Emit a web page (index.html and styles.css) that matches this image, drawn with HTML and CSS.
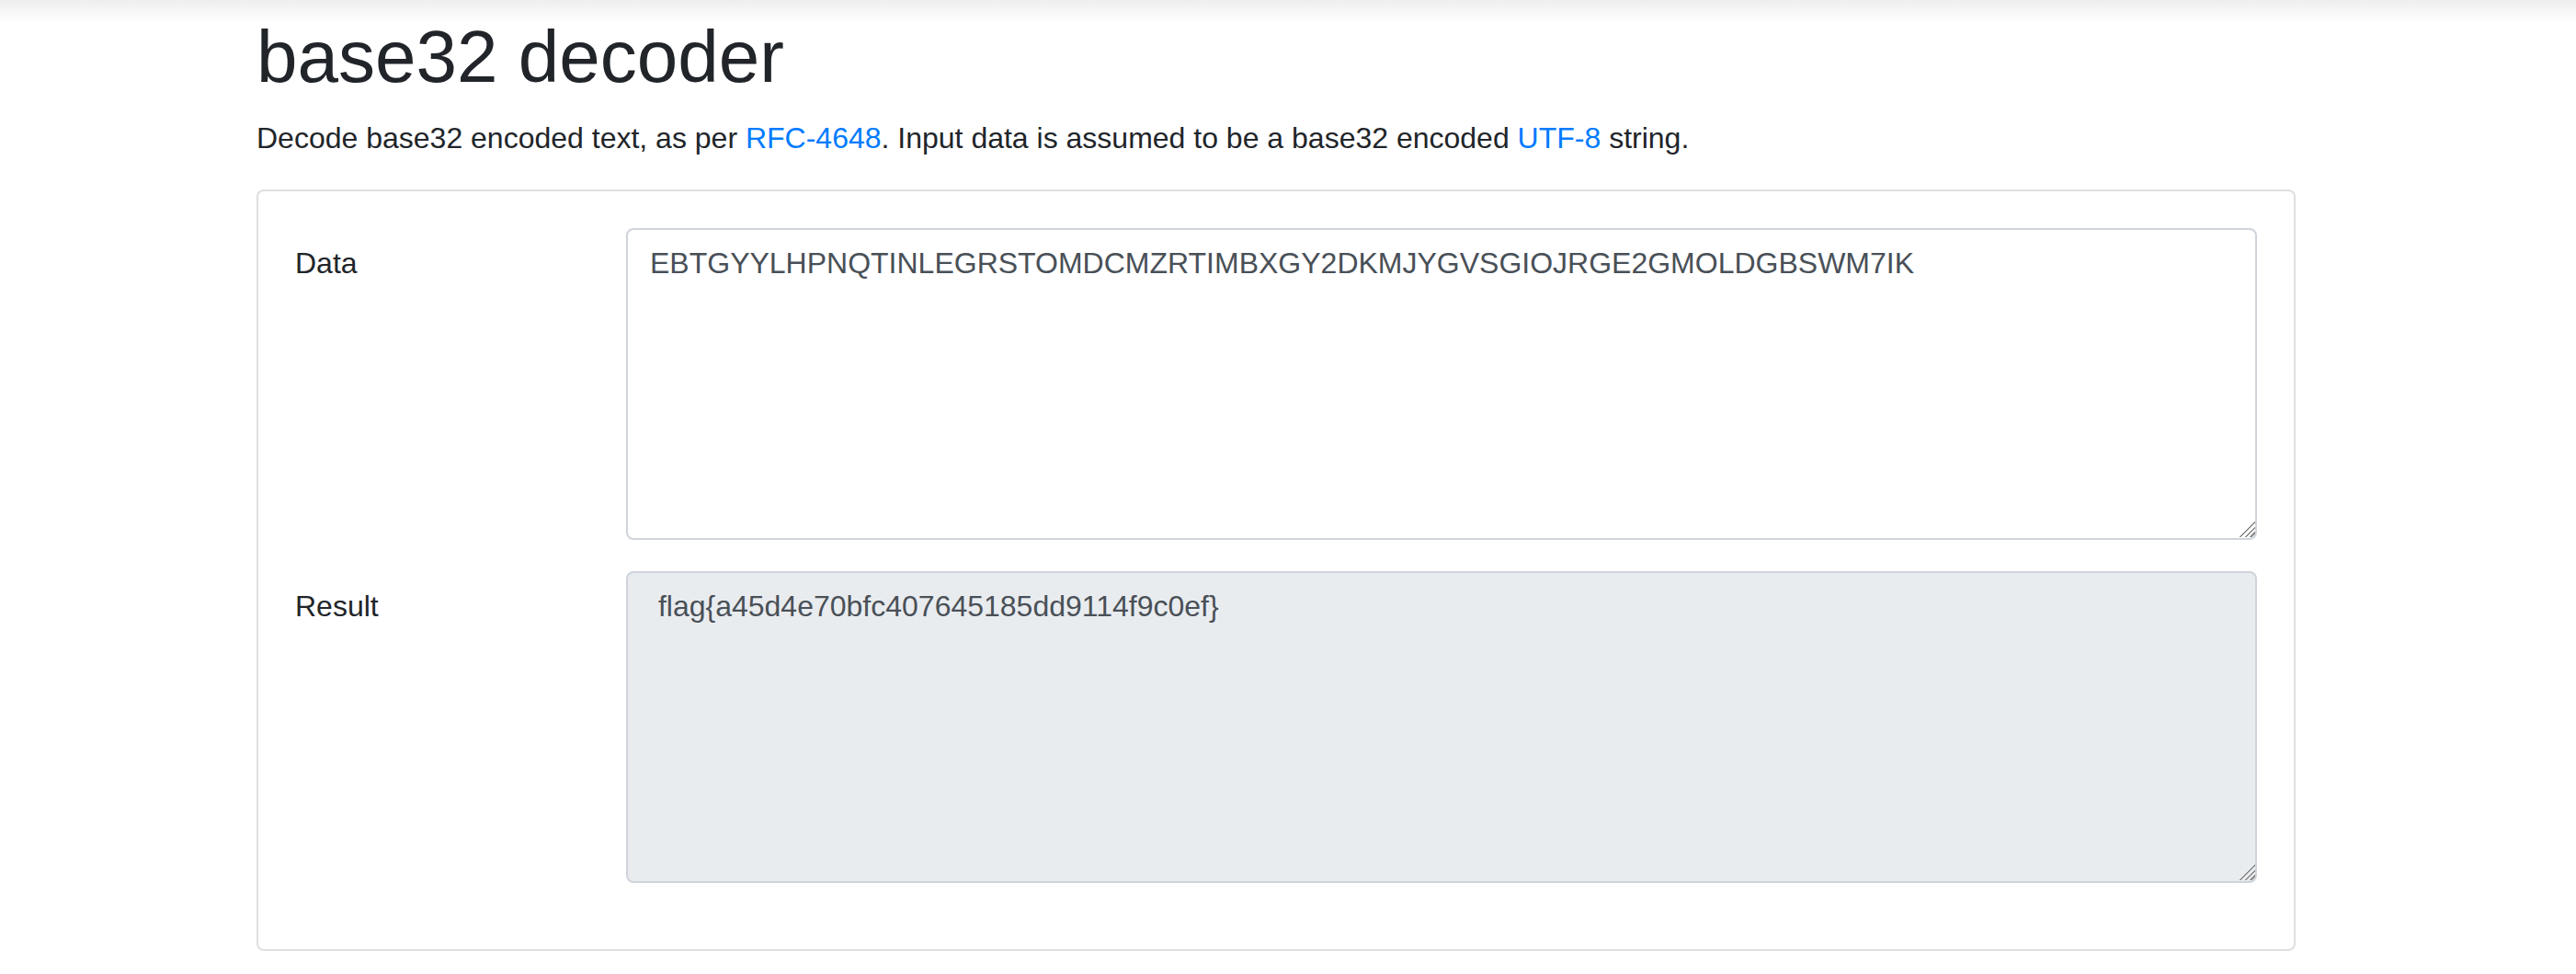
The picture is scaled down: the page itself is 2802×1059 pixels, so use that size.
FILE: index.html
```html
<!DOCTYPE html>
<html lang="en">
<head>
<meta charset="utf-8">
<title>base32 decoder</title>
<link rel="stylesheet" href="styles.css">
</head>
<body>
<main class="container">
  <h1 class="title">base32 decoder</h1>
  <p class="intro">Decode base32 encoded text, as per <a href="#">RFC-4648</a>. Input data is assumed to be a base32 encoded <a href="#">UTF-8</a> string.</p>
  <div class="card">
    <div class="card-body">
      <div class="form-row">
        <label class="col-label" for="data">Data</label>
        <div class="field">
          <textarea id="data" class="form-control">EBTGYYLHPNQTINLEGRSTOMDCMZRTIMBXGY2DKMJYGVSGIOJRGE2GMOLDGBSWM7IK</textarea>
          <span class="grip" aria-hidden="true"></span>
        </div>
      </div>
      <div class="form-row">
        <label class="col-label" for="result">Result</label>
        <div class="field">
          <textarea id="result" class="form-control is-readonly" readonly> flag{a45d4e70bfc407645185dd9114f9c0ef}
</textarea>
          <span class="grip" aria-hidden="true"></span>
        </div>
      </div>
    </div>
  </div>
</main>
</body>
</html>
```
FILE: styles.css
```css
html, body {
  margin: 0;
  padding: 0;
}

body {
  font-family: "Liberation Sans", Arial, Helvetica, sans-serif;
  font-size: 32px;
  line-height: 48px;
  color: #212529;
  background: #ffffff linear-gradient(#eeeeee, #ffffff 24px) no-repeat;
  background-size: 100% 24px;
}

.container {
  width: 2218px;
  margin: 0 0 0 279px;
  padding-top: 14px;
}

.title {
  margin: 0 0 16px;
  font-size: 80px;
  line-height: 96px;
  font-weight: 500;
}

.intro {
  margin: 0 0 32px;
}

.intro a {
  color: #007bff;
  text-decoration: none;
}

.card {
  border: 2px solid rgba(0, 0, 0, 0.125);
  border-radius: 8px;
  background: #ffffff;
}

.card-body {
  display: flex;
  flex-direction: column;
  gap: 34px;
  padding: 40px 40px 72px;
}

.form-row {
  display: grid;
  grid-template-columns: 360px 1fr;
}

.col-label {
  padding-top: 14px;
  line-height: 48px;
}

.field {
  position: relative;
}

.form-control {
  display: block;
  box-sizing: border-box;
  width: 100%;
  height: 339px;
  margin: 0;
  padding: 12px 24px;
  font-family: "Liberation Sans", Arial, Helvetica, sans-serif;
  font-size: 32px;
  line-height: 48px;
  color: #495057;
  background: #ffffff;
  border: 2px solid #ced4da;
  border-radius: 8px;
  outline: none;
  resize: none;
}

.form-control.is-readonly {
  background: #e9ecef;
}

.grip {
  position: absolute;
  right: 2px;
  bottom: 3px;
  width: 20px;
  height: 20px;
  clip-path: polygon(100% 0, 100% 100%, 0 100%);
  background: repeating-linear-gradient(135deg, #8c8c8c 0 1.6px, transparent 1.6px 4px);
  pointer-events: none;
}
```
